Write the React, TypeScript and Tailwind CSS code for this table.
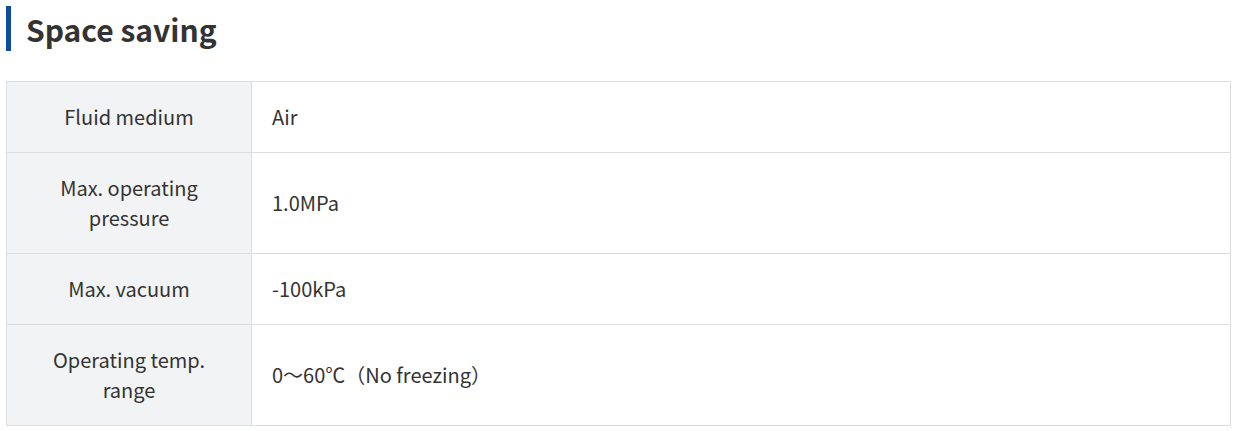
import React from 'react';

const specs = [
  { label: ['Fluid medium'], value: 'Air' },
  { label: ['Max. operating', 'pressure'], value: '1.0MPa' },
  { label: ['Max. vacuum'], value: '-100kPa' },
  { label: ['Operating temp.', 'range'], value: '0～60℃（No freezing）' },
];

const App: React.FC = () => {
  return (
    <div
      className="w-[1238px] h-[431px] bg-white text-[#333] pt-[6px] px-[6px]"
      style={{ fontFamily: '"Noto Sans CJK JP", "Noto Sans", sans-serif' }}
    >
      <div className="flex items-center h-[45px] border-l-[5px] border-[#0f4c9c] pl-[15px]">
        <h2 className="text-[30px] font-bold leading-none">Space saving</h2>
      </div>

      <table className="mt-[30px] w-[1225px] border-collapse border border-[#dddddd] text-[20px] leading-[30px]">
        <tbody>
          {specs.map((row) => (
            <tr key={row.value} className="border-b border-[#dddddd]">
              <th className="w-[245px] bg-[#f2f3f5] border-r border-[#dddddd] py-5 px-4 font-normal text-center">
                {row.label.map((l) => (
                  <div key={l}>{l}</div>
                ))}
              </th>
              <td className="py-5 px-5 text-left">{row.value}</td>
            </tr>
          ))}
        </tbody>
      </table>
    </div>
  );
};

export default App;
